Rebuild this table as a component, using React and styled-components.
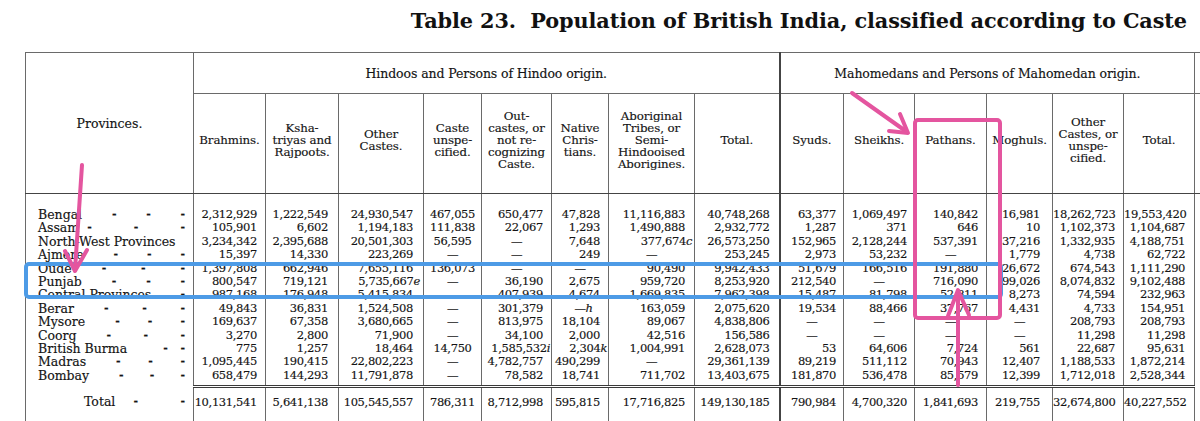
import React from 'react';
import styled, { createGlobalStyle } from 'styled-components';

const GlobalStyle = createGlobalStyle`
  html, body {
    margin: 0;
    padding: 0;
    background: #ffffff;
    overflow: hidden;
  }
  body {
    font-family: "DejaVu Serif", "Liberation Serif", serif;
    color: #1a1a1a;
  }
`;

const ink = '#141414';
const rule = '#6a6a6a';

const Page = styled.div`
  position: relative;
  width: 1200px;
  height: 421px;
  overflow: hidden;
  background: #fff;
`;

const Title = styled.h1`
  margin: 0;
  height: 52px;
  padding: 8px 13px 0 0;
  box-sizing: border-box;
  text-align: right;
  font-family: "DejaVu Serif", "Liberation Serif", serif;
  font-weight: bold;
  font-size: 20.8px;
  line-height: 26px;
  letter-spacing: -0.1px;
  color: #111;
  white-space: nowrap;
`;

const Sheet = styled.div`
  padding-left: 25px;
`;

const Table = styled.table`
  border-collapse: collapse;
  table-layout: fixed;
  width: 1229px;
  border-top: 1px solid ${rule};
  border-left: 1px solid ${rule};
  color: ${ink};
  -webkit-text-stroke: 0.15px ${ink};
`;

const GroupHead = styled.th`
  height: 40px;
  padding: 0;
  font-weight: normal;
  font-size: 12.5px;
  letter-spacing: -0.1px;
  text-align: center;
  border-bottom: 1px solid ${rule};
  border-right: ${p => (p.$heavy ? `2px solid #444` : `1px solid ${rule}`)};
`;

const ProvHead = styled.th`
  padding: 0;
  font-weight: normal;
  font-size: 12.5px;
  text-align: center;
  vertical-align: middle;
  border-right: 1px solid ${rule};
  border-bottom: 1px solid #444;
`;

const SubHead = styled.th`
  height: 91px;
  padding: 0 1px 8px;
  font-weight: normal;
  font-size: 11.8px;
  line-height: 12px;
  letter-spacing: -0.1px;
  text-align: center;
  vertical-align: middle;
  border-bottom: 1px solid #444;
  border-right: ${p => (p.$heavy ? `2px solid #444` : `1px solid ${rule}`)};
`;

const Row = styled.tr``;

const Gap = styled.td`
  height: ${p => p.$h}px;
  padding: 0;
  border-right: ${p => (p.$heavy ? `2px solid #444` : `1px solid ${rule}`)};
`;

const Label = styled.td`
  padding: 0 8px 0 ${p => (p.$total ? 58 : 12)}px;
  height: ${p => (p.$total ? 28 : 13.4)}px;
  font-size: 12.5px;
  line-height: 13.4px;
  white-space: nowrap;
  border-right: 1px solid ${rule};
`;

const LabelInner = styled.div`
  display: flex;
  align-items: center;
`;

const Dashes = styled.span`
  flex: 1;
  display: flex;
  justify-content: ${p => (p.$single ? 'flex-end' : 'space-between')};
  padding-left: ${p => p.$lead}px;
`;

const Dash = styled.span`
  font-size: 11px;
  font-weight: bold;
`;

const Num = styled.td`
  padding: 0 ${p => p.$pad}px 0 0;
  font-size: 11.5px;
  line-height: 13.4px;
  letter-spacing: -0.35px;
  white-space: nowrap;
  text-align: ${p => (p.$center ? 'center' : 'right')};
  border-right: ${p => (p.$heavy ? `2px solid #444` : `1px solid ${rule}`)};
  border-top: ${p => (p.$total ? `3px double #3a3a3a` : 'none')};
  ${p => (p.$total ? 'height: 28px;' : '')}
`;

const Suffix = styled.i`
  margin-right: -7px;
  font-style: italic;
`;

const Overlay = styled.svg`
  position: absolute;
  left: 0;
  top: 0;
  pointer-events: none;
`;

const widths = [168, 72, 73, 85, 58, 70, 57, 86, 85, 64, 71, 72, 66, 71, 71, 60];
const pads = [8, 10, 10, 0, 8, 8, 9, 9, 7, 7, 8, 12, 8, 9];
const heavyCol = 7;

const hindooHeads = [
  ['Brahmins.'],
  ['Ksha-', 'triyas and', 'Rajpoots.'],
  ['Other', 'Castes.'],
  ['Caste', 'unspe-', 'cified.'],
  ['Out-', 'castes, or', 'not re-', 'cognizing', 'Caste.'],
  ['Native', 'Chris-', 'tians.'],
  ['Aboriginal', 'Tribes, or', 'Semi-', 'Hindooised', 'Aborigines.'],
  ['Total.'],
];

const mahomedanHeads = [
  ['Syuds.'],
  ['Sheikhs.'],
  ['Pathans.'],
  ['Moghuls.'],
  ['Other', 'Castes, or', 'unspe-', 'cified.'],
  ['Total.'],
];

const rows = [
  ['Bengal', 3, 30, ['2,312,929', '1,222,549', '24,930,547', '467,055', '650,477', '47,828', '11,116,883', '40,748,268', '63,377', '1,069,497', '140,842', '16,981', '18,262,723', '19,553,420']],
  ['Assam', 3, 8, ['105,901', '6,602', '1,194,183', '111,838', '22,067', '1,293', '1,490,888', '2,932,772', '1,287', '371', '646', '10', '1,102,373', '1,104,687']],
  ['North-West Provinces', 0, 0, ['3,234,342', '2,395,688', '20,501,303', '56,595', '—', '7,648', '377,674|c', '26,573,250', '152,965', '2,128,244', '537,391', '37,216', '1,332,935', '4,188,751']],
  ['Ajmere', 3, 30, ['15,397', '14,330', '223,269', '—', '—', '249', '—', '253,245', '2,973', '53,232', '—', '1,779', '4,738', '62,722']],
  ['Oude', 3, 30, ['1,397,808', '662,946', '7,655,116', '136,073', '—', '—', '90,490', '9,942,433', '51,679', '166,516', '191,880', '26,672', '674,543', '1,111,290']],
  ['Punjab', 3, 30, ['800,547', '719,121', '5,735,667|e', '—', '36,190', '2,675', '959,720', '8,253,920', '212,540', '—', '716,090', '99,026', '8,074,832', '9,102,488']],
  ['Central Provinces', 1, 0, ['987,168', '176,948', '5,415,834', '—', '407,939', '4,674', '1,669,835', '7,962,398', '15,487', '81,798', '52,811', '8,273', '74,594', '232,963']],
  ['Berar', 3, 30, ['49,843', '36,831', '1,524,508', '—', '301,379', '—|h', '163,059', '2,075,620', '19,534', '88,466', '37,767', '4,431', '4,733', '154,951']],
  ['Mysore', 3, 30, ['169,637', '67,358', '3,680,665', '—', '813,975', '18,104', '89,067', '4,838,806', '—', '—', '—', '—', '208,793', '208,793']],
  ['Coorg', 3, 30, ['3,270', '2,800', '71,900', '—', '34,100', '2,000', '42,516', '156,586', '—', '—', '—', '—', '11,298', '11,298']],
  ['British Burma', 2, 36, ['775', '1,257', '18,464', '14,750', '1,585,532|i', '2,304|k', '1,004,991', '2,628,073', '53', '64,606', '7,724', '561', '22,687', '95,631']],
  ['Madras', 3, 30, ['1,095,445', '190,415', '22,802,223', '—', '4,782,757', '490,299', '—', '29,361,139', '89,219', '511,112', '70,943', '12,407', '1,188,533', '1,872,214']],
  ['Bombay', 3, 30, ['658,479', '144,293', '11,791,878', '—', '78,582', '18,741', '711,702', '13,403,675', '181,870', '536,478', '85,579', '12,399', '1,712,018', '2,528,344']],
];

const totals = ['10,131,541', '5,641,138', '105,545,557', '786,311', '8,712,998', '595,815', '17,716,825', '149,130,185', '790,984', '4,700,320', '1,841,693', '219,755', '32,674,800', '40,227,552'];

const Lines = ({ parts }) =>
  parts.map((p, i) => (
    <React.Fragment key={i}>
      {i > 0 && <br />}
      {p}
    </React.Fragment>
  ));

const Value = ({ v }) => {
  const [main, suffix] = v.split('|');
  return (
    <>
      {main}
      {suffix && <Suffix>{suffix}</Suffix>}
    </>
  );
};

const Cells = ({ values, total }) =>
  values.map((v, i) => (
    <Num
      key={i}
      $pad={v.startsWith('—') || i === 3 ? 0 : pads[i]}
      $center={v.startsWith('—') || i === 3}
      $heavy={i === heavyCol}
      $total={total}
    >
      <Value v={v} />
    </Num>
  ));

const ProvinceLabel = ({ name, dashes, lead, total }) => (
  <Label $total={total}>
    <LabelInner>
      <span>{name}</span>
      {dashes > 0 && (
        <Dashes $lead={lead} $single={dashes === 1}>
          {Array.from({ length: dashes }).map((_, i) => (
            <Dash key={i}>-</Dash>
          ))}
        </Dashes>
      )}
    </LabelInner>
  </Label>
);

const GapRow = ({ h }) => (
  <Row>
    {widths.map((_, i) => (
      <Gap key={i} $h={h} $heavy={i === heavyCol + 1} />
    ))}
  </Row>
);

const Annotations = () => (
  <Overlay width="1200" height="421" viewBox="0 0 1200 421">
    <g fill="none" strokeLinecap="round" strokeLinejoin="round">
      <rect x="26" y="264" width="975" height="33" rx="3" stroke="#4d9be6" strokeWidth="4" />
      <g stroke="#e4559f" strokeWidth="4">
        <path d="M82 165 L75 270" />
        <path d="M65 251 L75 271 L87 250" />
        <path d="M852 93 L907 132" />
        <path d="M900 114 L908 133 L889 131" />
        <rect x="915" y="120" width="85" height="198" rx="3" />
        <path d="M958 385 L958 292" />
        <path d="M948 316 L958 290 L969 315" />
      </g>
    </g>
  </Overlay>
);

export default function App() {
  return (
    <Page>
      <GlobalStyle />
      <Title>Table 23.&nbsp; Population of British India, classified according to Caste</Title>
      <Sheet>
        <Table>
          <colgroup>
            {widths.map((w, i) => (
              <col key={i} style={{ width: w }} />
            ))}
          </colgroup>
          <thead>
            <Row>
              <ProvHead rowSpan={2}>Provinces.</ProvHead>
              <GroupHead colSpan={8} $heavy>
                Hindoos and Persons of Hindoo origin.
              </GroupHead>
              <GroupHead colSpan={6}>Mahomedans and Persons of Mahomedan origin.</GroupHead>
              <GroupHead />
            </Row>
            <Row>
              {hindooHeads.map((h, i) => (
                <SubHead key={i} $heavy={i === heavyCol}>
                  <Lines parts={h} />
                </SubHead>
              ))}
              {mahomedanHeads.map((h, i) => (
                <SubHead key={i}>
                  <Lines parts={h} />
                </SubHead>
              ))}
              <SubHead />
            </Row>
          </thead>
          <tbody>
            <GapRow h={14} />
            {rows.map(([name, dashes, lead, values]) => (
              <Row key={name}>
                <ProvinceLabel name={name} dashes={dashes} lead={lead} />
                <Cells values={values} />
                <Gap $h={13.4} />
              </Row>
            ))}
            <GapRow h={3} />
            <Row>
              <ProvinceLabel name="Total" dashes={2} lead={18} total />
              <Cells values={totals} total />
              <Gap $h={28} />
            </Row>
            <GapRow h={20} />
          </tbody>
        </Table>
      </Sheet>
      <Annotations />
    </Page>
  );
}
